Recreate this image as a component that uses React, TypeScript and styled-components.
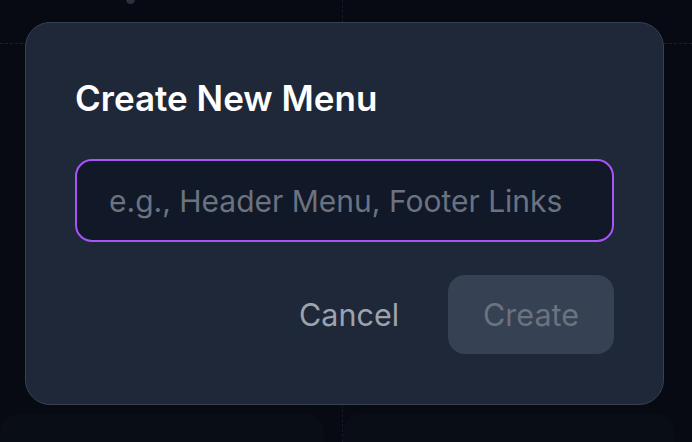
import React from "react";
import styled, { createGlobalStyle } from "styled-components";

const Global = createGlobalStyle`
  * { box-sizing: border-box; }
  html, body { margin: 0; padding: 0; background: #070a12; }
  body { font-family: Inter, "Noto Sans", sans-serif; overflow: hidden; }
`;

const Page = styled.div`
  position: relative;
  width: 692px;
  height: 442px;
  overflow: hidden;
  background: #070a12;
  display: grid;
  grid-template-columns: 343px 1fr;
`;

const Column = styled.div<{ $divider?: boolean }>`
  border-right: ${(p) => (p.$divider ? "1px dashed #141a26" : "none")};
  display: flex;
  flex-direction: column;
  justify-content: space-between;
`;

const TopBar = styled.div`
  height: 44px;
  border-bottom: 1px dashed #1a2030;
  display: flex;
  align-items: flex-start;
  padding-left: 126px;
`;

const Dot = styled.span`
  width: 9px;
  height: 9px;
  margin-top: -5px;
  border-radius: 50%;
  background: #2a3140;
`;

const FaintCard = styled.div`
  height: 30px;
  margin: 0 18px -2px 0;
  border-radius: 18px 18px 0 0;
  background: #090d15;
`;

const Overlay = styled.div`
  position: absolute;
  inset: 0;
  display: flex;
  align-items: flex-start;
  justify-content: flex-start;
  padding: 22px 0 0 25px;
`;

const Modal = styled.div`
  width: 639px;
  height: 383px;
  background: #1f2838;
  border: 1px solid #364152;
  border-radius: 25px;
  padding: 50px 49px 49px;
  display: flex;
  flex-direction: column;
`;

const Title = styled.h2`
  margin: 0;
  font-size: 35px;
  line-height: 51px;
  font-weight: 600;
  color: #ffffff;
  letter-spacing: 0;
`;

const Input = styled.input`
  margin-top: 35px;
  width: 100%;
  height: 83px;
  border: 2px solid #a855f7;
  border-radius: 17px;
  background: #111827;
  padding: 0 32px;
  font-family: inherit;
  font-size: 30px;
  color: #e5e7eb;
  outline: none;
  &::placeholder { color: #6b7280; }
`;

const Actions = styled.div`
  margin-top: 33px;
  display: flex;
  justify-content: flex-end;
  gap: 14px;
`;

const Button = styled.button<{ $primary?: boolean }>`
  height: 79px;
  padding: 0 35px;
  border: none;
  border-radius: 17px;
  font-family: inherit;
  font-size: 30.5px;
  font-weight: 400;
  background: ${(p) => (p.$primary ? "#364153" : "transparent")};
  color: ${(p) => (p.$primary ? "#6b7280" : "#9ca3af")};
  cursor: ${(p) => (p.$primary ? "not-allowed" : "pointer")};
`;

export default function App() {
  return (
    <>
      <Global />
      <Page>
        <Column $divider>
          <TopBar>
            <Dot />
          </TopBar>
          <FaintCard />
        </Column>
        <Column>
          <TopBar />
          <FaintCard />
        </Column>
        <Overlay>
          <Modal>
            <Title>Create New Menu</Title>
            <Input placeholder="e.g., Header Menu, Footer Links" />
            <Actions>
              <Button>Cancel</Button>
              <Button $primary disabled>Create</Button>
            </Actions>
          </Modal>
        </Overlay>
      </Page>
    </>
  );
}
